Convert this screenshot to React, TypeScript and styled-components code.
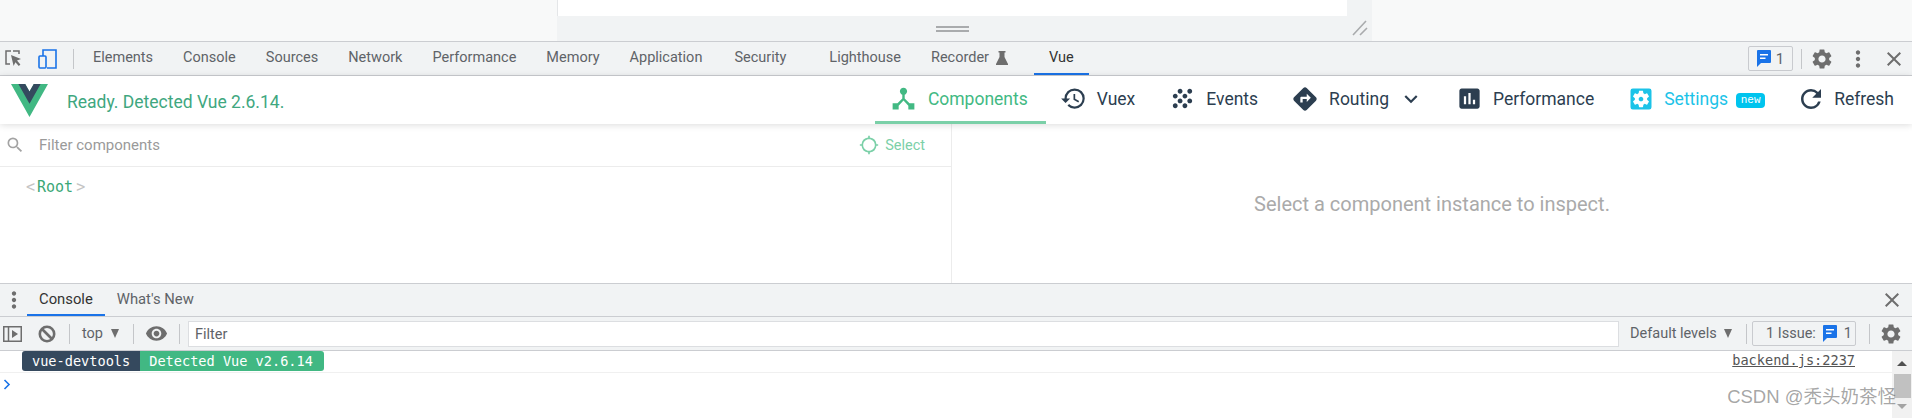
import React from "react";
import styled, { createGlobalStyle } from "styled-components";
import {
  MdClose,
  MdDeviceHub,
  MdDirections,
  MdAssessment,
  MdGpsNotFixed,
  MdGrain,
  MdHistory,
  MdKeyboardArrowDown,
  MdMoreVert,
  MdRefresh,
  MdSearch,
  MdSettings,
  MdSettingsApplications,
  MdVisibility,
} from "react-icons/md";

const GlobalStyle = createGlobalStyle`
  html, body {
    margin: 0;
    padding: 0;
    background: #fff;
    overflow: hidden;
  }
  * {
    box-sizing: border-box;
  }
`;

const Page = styled.div`
  position: relative;
  width: 1912px;
  height: 418px;
  display: flex;
  flex-direction: column;
  font-family: Roboto, "Liberation Sans", sans-serif;
  overflow: hidden;
`;

/* page being inspected, above the devtools */
const Viewport = styled.div`
  height: 41px;
  flex: none;
  background: #f8f9f9;
  padding-left: 557px;
`;
const EmulatedPanel = styled.div`
  position: relative;
  width: 815px;
  height: 41px;
  background: #f1f3f4;
  display: flex;
  justify-content: flex-start;
`;
const EmulatedScreen = styled.div`
  width: 790px;
  height: 16px;
  background: #fff;
  border-left: 1px solid #e4e6e8;
`;
const Grip = styled.div`
  position: absolute;
  left: 379px;
  top: 26px;
  width: 33px;
  height: 6px;
  border-top: 2px solid #a9abad;
  border-bottom: 2px solid #a9abad;
`;
const ResizeCorner = styled.svg`
  position: absolute;
  right: 4px;
  top: 20px;
`;

const TabStrip = styled.div`
  height: 35px;
  flex: none;
  display: flex;
  align-items: stretch;
  background: #f1f3f4;
  border-top: 1px solid #cbcdd1;
  border-bottom: 1px solid #cbcdd1;
`;
const ToolIcons = styled.div`
  width: 78px;
  flex: none;
  display: flex;
  align-items: center;
  padding-left: 5px;
  gap: 16px;
`;
const Divider = styled.span<{ $h?: number; $c?: string }>`
  width: 1px;
  height: ${(p) => p.$h ?? 20}px;
  flex: none;
  background: ${(p) => p.$c ?? "#c4c6c9"};
`;
const Tab = styled.div<{ $active?: boolean; $extra?: number }>`
  display: flex;
  align-items: center;
  gap: 7px;
  padding: 0 15px;
  margin-left: ${(p) => p.$extra ?? 0}px;
  font-size: 14.5px;
  color: ${(p) => (p.$active ? "#333" : "#5f6368")};
  border-bottom: 2px solid ${(p) => (p.$active ? "#1a73e8" : "transparent")};
  white-space: nowrap;
`;
const Spring = styled.div`
  flex: 1;
`;
const IssueChip = styled.div`
  width: 45px;
  height: 25px;
  align-self: center;
  display: flex;
  align-items: center;
  justify-content: center;
  gap: 5px;
  border: 1px solid #c9cbcf;
  border-radius: 2px;
  font-size: 15px;
  color: #5f6368;
`;
const StripTools = styled.div`
  display: flex;
  align-items: center;
  gap: 0;
  color: #6e6e6e;
`;
const IconSlot = styled.span<{ $w: number; $color?: string }>`
  width: ${(p) => p.$w}px;
  flex: none;
  display: flex;
  align-items: center;
  justify-content: center;
  color: ${(p) => p.$color ?? "inherit"};
  svg {
    flex: none;
  }
`;

/* vue devtools header */
const VueBar = styled.div`
  position: relative;
  z-index: 2;
  height: 48px;
  flex: none;
  display: flex;
  align-items: stretch;
  background: #fff;
  box-shadow: 0 1px 7px rgba(0, 0, 0, 0.14);
`;
const Brand = styled.div`
  display: flex;
  align-items: center;
  padding-left: 11px;
  gap: 19px;
`;
const ReadyText = styled.span`
  font-size: 17.5px;
  color: #3fa77f;
  padding-top: 4px;
`;
const Nav = styled.nav`
  margin-left: auto;
  display: flex;
  align-items: stretch;
`;
const NavItem = styled.div<{ $color?: string; $active?: boolean }>`
  display: flex;
  align-items: center;
  gap: 13px;
  padding: 0 18px;
  font-size: 17.5px;
  color: ${(p) => p.$color ?? "#2c3e50"};
  border-bottom: 3px solid ${(p) => (p.$active ? "#7bd0a8" : "transparent")};
  white-space: nowrap;
`;
const Chevron = styled.span`
  margin-left: -4px;
  display: flex;
  svg {
    flex: none;
  }
`;
const NewBadge = styled.span`
  width: 29px;
  height: 15px;
  margin-left: -5px;
  margin-top: 3px;
  display: flex;
  align-items: center;
  justify-content: center;
  border-radius: 4px;
  background: #00c4ee;
  color: #fff;
  font: 11px "Liberation Mono", monospace;
`;

const Panes = styled.div`
  height: 159px;
  flex: none;
  display: flex;
`;
const TreePane = styled.div`
  width: 952px;
  flex: none;
  border-right: 1px solid #ececec;
`;
const FilterRow = styled.div`
  height: 43px;
  display: flex;
  align-items: center;
  padding: 0 26px 0 5px;
  border-bottom: 1px solid #ececec;
`;
const FilterLabel = styled.span`
  margin-left: 14px;
  font-size: 15px;
  color: #9a9a9a;
`;
const SelectButton = styled.div`
  margin-left: auto;
  display: flex;
  align-items: center;
  gap: 6px;
  font-size: 14.5px;
  color: #7bd0a8;
`;
const Tree = styled.div`
  padding: 11px 0 0 26px;
  font: 15px "DejaVu Sans Mono", monospace;
  color: #3ba776;
`;
const Bracket = styled.span<{ $open?: boolean }>`
  color: #c4c4c4;
  margin: ${(p) => (p.$open ? "0 2px 0 0" : "0 0 0 3px")};
`;
const EmptyPane = styled.div`
  flex: 1;
  display: flex;
  align-items: center;
  justify-content: center;
  font-size: 20px;
  color: #aaa;
`;

/* console drawer */
const DrawerTabs = styled.div`
  height: 34px;
  flex: none;
  display: flex;
  align-items: stretch;
  background: #f1f3f4;
  border-top: 1px solid #cbcdd1;
  border-bottom: 1px solid #cbcdd1;
`;
const DrawerTab = styled.div<{ $active?: boolean }>`
  display: flex;
  align-items: center;
  padding: 0 12px;
  font-size: 14.8px;
  color: ${(p) => (p.$active ? "#333" : "#5f6368")};
  border-bottom: 2px solid ${(p) => (p.$active ? "#1a73e8" : "transparent")};
`;
const ConsoleBar = styled.div`
  height: 34px;
  flex: none;
  display: flex;
  align-items: center;
  background: #f1f3f4;
  border-bottom: 1px solid #cbcdd1;
  color: #6e6e6e;
  font-size: 14.5px;
`;
const ContextPicker = styled.div`
  width: 63px;
  flex: none;
  padding-left: 12px;
  display: flex;
  align-items: center;
  justify-content: flex-start;
  gap: 8px;
  color: #5f6368;
`;
const Caret = styled.span`
  width: 0;
  height: 0;
  border-left: 4.5px solid transparent;
  border-right: 4.5px solid transparent;
  border-top: 9px solid #6e6e6e;
`;
const FilterInput = styled.div`
  width: 1431px;
  height: 26px;
  margin-left: 8px;
  flex: none;
  display: flex;
  align-items: center;
  padding: 1px 0 0 6px;
  background: #fff;
  border: 1px solid #dcdee1;
  color: #5f6368;
`;
const LevelPicker = styled.div`
  width: 127px;
  flex: none;
  padding-left: 11px;
  display: flex;
  align-items: center;
  gap: 7px;
  color: #5f6368;
`;
const IssuesButton = styled.div`
  width: 104px;
  height: 25px;
  margin: 0 13px 0 5px;
  flex: none;
  display: flex;
  align-items: center;
  gap: 7px;
  padding-left: 13px;
  border: 1px solid #c9cbcf;
  border-radius: 2px;
  color: #5f6368;
`;

const Messages = styled.div`
  flex: 1;
  display: flex;
`;
const MessageColumn = styled.div`
  flex: 1;
`;
const MessageRow = styled.div`
  height: 22px;
  display: flex;
  align-items: flex-start;
  padding-left: 22px;
  padding-right: 37px;
  border-bottom: 1px solid #f0f0f0;
`;
const Badge = styled.span<{ $bg: string; $left?: boolean }>`
  height: 20px;
  display: flex;
  align-items: center;
  padding: ${(p) => (p.$left ? "0 10px" : "0 11px 0 9px")};
  background: ${(p) => p.$bg};
  border-radius: ${(p) => (p.$left ? "3px 0 0 3px" : "0 3px 3px 0")};
  color: #fff;
  font: 13.6px "DejaVu Sans Mono", monospace;
`;
const SourceLink = styled.span`
  margin-left: auto;
  margin-top: 1px;
  font: 13.6px "DejaVu Sans Mono", monospace;
  color: #555;
  text-decoration: underline;
`;
const Prompt = styled.div`
  padding: 6px 0 0 3px;
  color: #1a73e8;
  display: flex;
`;
const ScrollTrack = styled.div`
  width: 20px;
  flex: none;
  display: flex;
  flex-direction: column;
  align-items: center;
  background: #f1f1f1;
`;
const ScrollArrow = styled.span<{ $down?: boolean }>`
  width: 0;
  height: 0;
  margin: ${(p) => (p.$down ? "6px 0 0" : "10px 0 8px")};
  border-left: 5px solid transparent;
  border-right: 5px solid transparent;
  ${(p) =>
    p.$down
      ? "border-top: 5px solid #a3a3a3;"
      : "border-bottom: 5px solid #505050;"}
`;
const ScrollThumb = styled.span`
  width: 17px;
  height: 24px;
  background: #c1c1c1;
`;
const Watermark = styled.div`
  position: absolute;
  right: 16px;
  bottom: 10px;
  font: 18.5px "Liberation Sans", "Noto Sans CJK SC", sans-serif;
  color: rgba(90, 90, 90, 0.55);
  white-space: nowrap;
`;

const VueLogo = () => (
  <svg width="37" height="33" viewBox="0 0 261.76 226.69" preserveAspectRatio="none">
    <path d="M161.096.001l-30.225 52.351L100.647.001H-.005l130.877 226.688L261.749.001z" fill="#41b883" />
    <path d="M161.096.001l-30.225 52.351L100.647.001H52.346l78.526 136.01L209.398.001z" fill="#34495e" />
  </svg>
);

const InspectIcon = () => (
  <svg width="17" height="17" viewBox="0 0 17 17" fill="none">
    <path d="M6 1H1v13h4" stroke="#6e6e6e" strokeWidth="1.5" />
    <path d="M8 1h6v3" stroke="#6e6e6e" strokeWidth="1.5" />
    <path d="M6 5l10 4-4 1.6 3.4 3.8-1.6 1.6-3.4-3.8L8.6 16z" fill="#6e6e6e" />
  </svg>
);

const DeviceIcon = () => (
  <svg width="19" height="20" viewBox="0 0 19 20" fill="none" stroke="#1a73e8" strokeWidth="1.6">
    <path d="M5 7V1h13v18H9" />
    <rect x="1" y="7" width="7" height="12" rx="1" />
  </svg>
);

const FlaskIcon = () => (
  <svg width="12" height="14" viewBox="0 0 12 14">
    <path d="M2.5 0h7v1.5h-1V6L12 13v1H0v-1l3.5-7V1.5h-1z" fill="#6e6e6e" />
  </svg>
);

const IssueIcon = ({ size = 14 }: { size?: number }) => (
  <svg width={size} height={size + 3} viewBox="0 0 14 17">
    <path d="M1 0h12a1 1 0 0 1 1 1v11a1 1 0 0 1-1 1H4l-4 4V1a1 1 0 0 1 1-1z" fill="#1a73e8" />
    <path d="M3 4h8v1.6H3zM3 7.4h5.5V9H3z" fill="#fff" />
  </svg>
);

const SidebarIcon = () => (
  <svg width="19" height="16" viewBox="0 0 19 16" fill="none">
    <rect x="0.75" y="0.75" width="17.5" height="14.5" stroke="#6e6e6e" strokeWidth="1.5" />
    <path d="M5.5 1v14" stroke="#6e6e6e" strokeWidth="1.5" />
    <path d="M9 4l6 4-6 4z" fill="#6e6e6e" />
  </svg>
);

const ClearIcon = () => (
  <svg width="18" height="18" viewBox="0 0 18 18" fill="none" stroke="#6e6e6e" strokeWidth="2.6">
    <circle cx="9" cy="9" r="7.2" />
    <path d="M4 4l10 10" />
  </svg>
);

const ResizeIcon = () => (
  <ResizeCorner width="16" height="16" viewBox="0 0 16 16" fill="none" stroke="#a9abad" strokeWidth="1.6">
    <path d="M1 15L14 1M8 15l7-7" />
  </ResizeCorner>
);

const tabs = ["Elements", "Console", "Sources", "Network", "Performance", "Memory", "Application"];

export default function App() {
  return (
    <Page>
      <GlobalStyle />
      <Viewport>
        <EmulatedPanel>
          <EmulatedScreen />
          <Grip />
          <ResizeIcon />
        </EmulatedPanel>
      </Viewport>

      <TabStrip>
        <ToolIcons>
          <InspectIcon />
          <DeviceIcon />
          <Divider />
        </ToolIcons>
        {tabs.map((t) => (
          <Tab key={t}>{t}</Tab>
        ))}
        <Tab $extra={2}>Security</Tab>
        <Tab $extra={13}>Lighthouse</Tab>
        <Tab>
          Recorder
          <FlaskIcon />
        </Tab>
        <Tab $active $extra={11}>Vue</Tab>
        <Spring />
        <StripTools>
          <IssueChip>
            <IssueIcon />1
          </IssueChip>
          <IconSlot $w={17}>
            <Divider $h={20} />
          </IconSlot>
          <IconSlot $w={24}>
            <MdSettings size={24} />
          </IconSlot>
          <IconSlot $w={48}>
            <MdMoreVert size={26} />
          </IconSlot>
          <IconSlot $w={24}>
            <MdClose size={24} />
          </IconSlot>
          <IconSlot $w={6} />
        </StripTools>
      </TabStrip>

      <VueBar>
        <Brand>
          <VueLogo />
          <ReadyText>Ready. Detected Vue 2.6.14.</ReadyText>
        </Brand>
        <Nav>
          <NavItem $active $color="#42b983">
            <IconSlot $w={22}>
              <MdDeviceHub size={29} />
            </IconSlot>
            Components
          </NavItem>
          <NavItem>
            <IconSlot $w={20}>
              <MdHistory size={27} />
            </IconSlot>
            Vuex
          </NavItem>
          <NavItem>
            <IconSlot $w={22}>
              <MdGrain size={29} />
            </IconSlot>
            Events
          </NavItem>
          <NavItem>
            <IconSlot $w={22}>
              <MdDirections size={28} />
            </IconSlot>
            Routing
            <Chevron>
              <MdKeyboardArrowDown size={26} />
            </Chevron>
          </NavItem>
          <NavItem>
            <IconSlot $w={20}>
              <MdAssessment size={27} />
            </IconSlot>
            Performance
          </NavItem>
          <NavItem $color="#1cc3e8">
            <IconSlot $w={21}>
              <MdSettingsApplications size={28} />
            </IconSlot>
            Settings
            <NewBadge>new</NewBadge>
          </NavItem>
          <NavItem>
            <IconSlot $w={20}>
              <MdRefresh size={30} />
            </IconSlot>
            Refresh
          </NavItem>
        </Nav>
      </VueBar>

      <Panes>
        <TreePane>
          <FilterRow>
            <MdSearch size={20} color="#a3a3a3" />
            <FilterLabel>Filter components</FilterLabel>
            <SelectButton>
              <MdGpsNotFixed size={20} />
              Select
            </SelectButton>
          </FilterRow>
          <Tree>
            <Bracket $open>&lt;</Bracket>Root<Bracket>&gt;</Bracket>
          </Tree>
        </TreePane>
        <EmptyPane>Select a component instance to inspect.</EmptyPane>
      </Panes>

      <DrawerTabs>
        <IconSlot $w={27} $color="#6e6e6e">
          <MdMoreVert size={26} />
        </IconSlot>
        <DrawerTab $active>Console</DrawerTab>
        <DrawerTab>What's New</DrawerTab>
        <Spring />
        <IconSlot $w={40} $color="#6e6e6e">
          <MdClose size={24} />
        </IconSlot>
      </DrawerTabs>

      <ConsoleBar>
        <IconSlot $w={24}>
          <SidebarIcon />
        </IconSlot>
        <IconSlot $w={45}>
          <ClearIcon />
        </IconSlot>
        <Divider $h={20} />
        <ContextPicker>
          top
          <Caret />
        </ContextPicker>
        <Divider $h={20} />
        <IconSlot $w={45}>
          <MdVisibility size={23} />
        </IconSlot>
        <Divider $h={20} />
        <FilterInput>Filter</FilterInput>
        <LevelPicker>
          Default levels
          <Caret />
        </LevelPicker>
        <Divider $h={20} />
        <IssuesButton>
          1 Issue:
          <IssueIcon />1
        </IssuesButton>
        <Divider $h={20} />
        <IconSlot $w={42}>
          <MdSettings size={24} />
        </IconSlot>
      </ConsoleBar>

      <Messages>
        <MessageColumn>
          <MessageRow>
            <Badge $bg="#35495e" $left>vue-devtools</Badge>
            <Badge $bg="#41b883">Detected Vue v2.6.14</Badge>
            <SourceLink>backend.js:2237</SourceLink>
          </MessageRow>
          <Prompt>
            <svg width="8" height="11" viewBox="0 0 8 11" fill="none" stroke="currentColor" strokeWidth="1.6">
              <path d="M1.5 1l4.5 4.5L1.5 10" />
            </svg>
          </Prompt>
        </MessageColumn>
        <ScrollTrack>
          <ScrollArrow />
          <ScrollThumb />
          <ScrollArrow $down />
        </ScrollTrack>
      </Messages>

      <Watermark>CSDN @秃头奶茶怪</Watermark>
    </Page>
  );
}
